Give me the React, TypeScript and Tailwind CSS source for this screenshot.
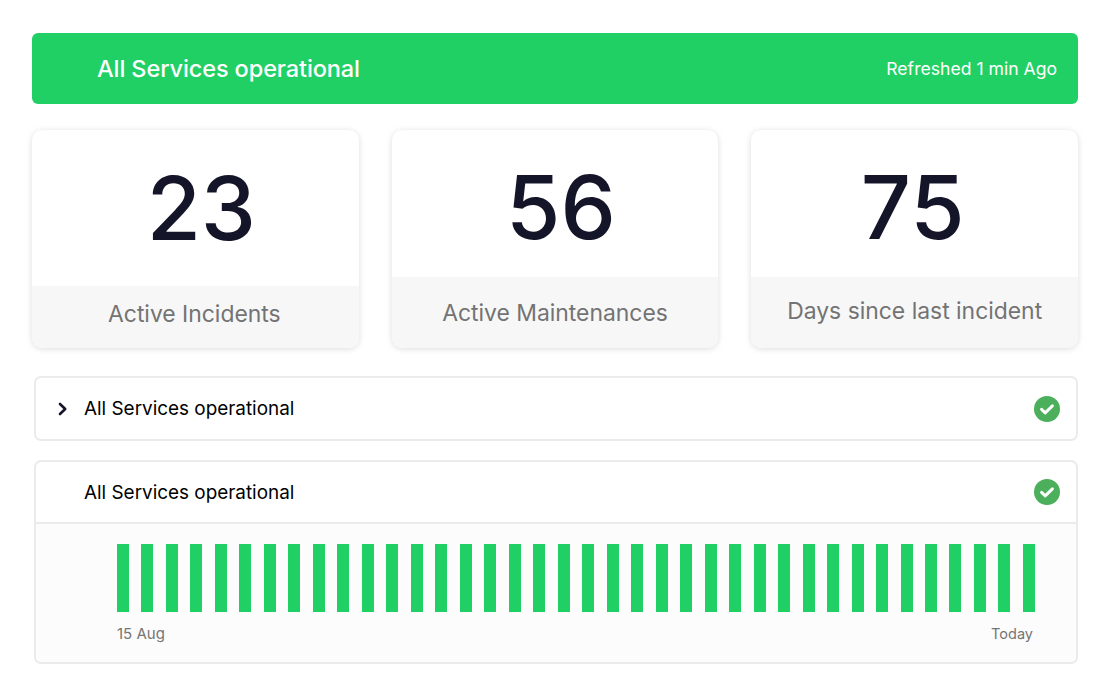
function Check() {
  return (
    <svg width="26" height="26" viewBox="0 0 26 26" className="shrink-0">
      <circle cx="13" cy="13" r="13" fill="#4caf5b" />
      <path d="M7.6 13.4l3.6 3.4 7.2-7" fill="none" stroke="#fff" strokeWidth="3" strokeLinecap="round" strokeLinejoin="round" />
    </svg>
  );
}

function Card({ n, label, footH, numClass, labelClass }: { n: string; label: string; footH: string; numClass: string; labelClass: string }) {
  return (
    <div className="flex-1 h-[218px] flex flex-col rounded-[10px] overflow-hidden bg-white shadow-[0_1px_6px_rgba(0,0,0,0.14)]">
      <div className={`flex-1 flex items-center justify-center text-[88px] font-medium leading-none text-[#141529] ${numClass}`}>{n}</div>
      <div className={`${footH} bg-[#f7f7f8] flex items-center justify-center text-[22.9px] text-[#737373] ${labelClass}`}>{label}</div>
    </div>
  );
}

export default function App() {
  const bars = Array.from({ length: 38 });
  return (
    <div className="w-[1112px] h-[696px] bg-white pt-[33px] pl-[32px] pr-[34px] overflow-hidden" style={{ fontFamily: 'Inter, sans-serif' }}>
      <div className="h-[71px] bg-[#21d064] rounded-[6px] flex items-center justify-between pl-[65px] pr-[21px] pt-[1px] text-white">
        <span className="text-[23.5px] font-medium tracking-[-0.1px]">All Services operational</span>
        <span className="text-[17.6px]">Refreshed 1 min Ago</span>
      </div>
      <div className="flex gap-[33px] mt-[26px]">
        <Card n="23" label="Active Incidents" footH="h-[62px]" numClass="pl-[12px] pb-[1px]" labelClass="pr-[2px] pb-[6px]" />
        <Card n="56" label="Active Maintenances" footH="h-[71px]" numClass="pl-[12px] pt-[7px]" labelClass="pt-[2px]" />
        <Card n="75" label="Days since last incident" footH="h-[71px]" numClass="pr-[4px] pt-[7px]" labelClass="pb-[2px]" />
      </div>
      <div className="ml-[2px] mt-[28px] h-[65px] border-2 border-[#ebebeb] rounded-[7px] flex items-center pl-[21px] pr-[16px] text-[18.9px] text-black">
        <svg width="12" height="14" viewBox="0 0 12 14" className="shrink-0 mr-[15px]">
          <path d="M3 2l5.2 5L3 12" fill="none" stroke="#141529" strokeWidth="2.6" strokeLinecap="round" strokeLinejoin="round" />
        </svg>
        <span className="flex-1 pt-[2px]">All Services operational</span>
        <Check />
      </div>
      <div className="ml-[2px] mt-[19px] h-[204px] border-2 border-[#ebebeb] rounded-[7px] overflow-hidden flex flex-col">
        <div className="h-[62px] shrink-0 flex items-center pl-[48px] pr-[16px] text-[18.9px] text-black border-b-2 border-[#ebebeb]">
          <span className="flex-1 pt-[2px]">All Services operational</span>
          <Check />
        </div>
        <div className="flex-1 bg-[#fcfcfc] pl-[81px] pr-[41px] pt-[20px]">
          <div className="flex justify-between h-[68px]">
            {bars.map((_, i) => (
              <div key={i} className="w-[12px] bg-[#21d064]" />
            ))}
          </div>
          <div className="flex justify-between mt-[12px] pr-[2px] text-[14.5px] text-[#757575] leading-[20px]">
            <span className="text-[15px]">15 Aug</span>
            <span>Today</span>
          </div>
        </div>
      </div>
    </div>
  );
}
